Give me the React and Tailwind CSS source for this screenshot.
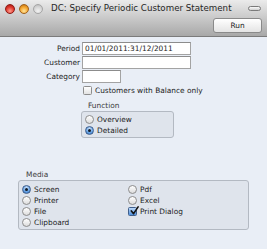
import React from "react";

function Radio({ on }) {
  return on ? (
    <span className="flex h-[9px] w-[9px] shrink-0 items-center justify-center rounded-full border border-[#3f5f8c] bg-[radial-gradient(circle_at_50%_30%,#d4e6fb,#6aa5e6_55%,#2f6fc0)]">
      <span className="h-[3px] w-[3px] rounded-full bg-[#111a26]" />
    </span>
  ) : (
    <span className="h-[9px] w-[9px] shrink-0 rounded-full border border-[#8d8d8d] bg-linear-to-b from-[#ffffff] to-[#dcdcdc]" />
  );
}

function Check({ on }) {
  return on ? (
    <span className="relative flex h-[9px] w-[9px] shrink-0 items-center justify-center rounded-[1.5px] border border-[#3f5f8c] bg-linear-to-b from-[#b9d6f7] to-[#4d8fdc]">
      <svg viewBox="0 0 10 10" className="absolute left-[1px] top-[-2px] h-[9px] w-[9px]">
        <path d="M1.5 5.5 L4 8.5 L9 1" fill="none" stroke="#111" strokeWidth="1.8" strokeLinecap="round" strokeLinejoin="round" />
      </svg>
    </span>
  ) : (
    <span className="h-[9px] w-[9px] shrink-0 rounded-[1.5px] border border-[#8d8d8d] bg-linear-to-b from-[#ffffff] to-[#e2e2e2]" />
  );
}

function Opt({ children, kind = "radio", on = false }) {
  return (
    <div className="flex h-[11px] items-center gap-[3px]">
      {kind === "radio" ? <Radio on={on} /> : <Check on={on} />}
      <span className="leading-none">{children}</span>
    </div>
  );
}

export default function App() {
  return (
    <div className="flex h-[249px] w-[267px] flex-col overflow-hidden font-['DejaVu_Sans',sans-serif] text-[7.4px] text-[#1c1c1c]">
      <div className="flex h-[37px] shrink-0 flex-col border-b border-[#7b7b7b] bg-linear-to-b from-[#ebebeb] to-[#a8a8a8]">
        <div className="flex h-[17px] items-center pl-[5px] pr-[6px]">
          <div className="flex gap-[4px]">
            <span className="h-[10px] w-[10px] rounded-full border border-[#8e1a14] bg-[radial-gradient(circle_at_50%_75%,#ff9d8f,#e0382c_55%,#9a140e)]" />
            <span className="h-[10px] w-[10px] rounded-full border border-[#a0601a] bg-[radial-gradient(circle_at_50%_75%,#ffe49a,#f4a42c_55%,#b4680e)]" />
            <span className="h-[10px] w-[10px] rounded-full border border-[#a5a5a5] bg-[radial-gradient(circle_at_50%_75%,#f2f2f2,#d3d3d3_60%,#b5b5b5)]" />
          </div>
          <span className="ml-[8px] text-[8.7px] leading-none text-[#262626]">DC: Specify Periodic Customer Statement</span>
          <span className="ml-auto h-[5px] w-[13px] rounded-full border border-[#7a7a7a] bg-linear-to-b from-[#fafafa] to-[#cfcfcf]" />
        </div>
        <div className="flex justify-end pr-[5px] pt-[1px]">
          <div className="flex h-[15px] w-[49px] items-center justify-center rounded-[3px] border border-[#8a8a8a] bg-linear-to-b from-[#ffffff] to-[#e4e4e4] text-[7.4px] leading-none">
            Run
          </div>
        </div>
      </div>

      <div className="flex-1 bg-[#e9eef6] pt-[5px]">
        <div className="grid grid-cols-[80px_auto] items-center gap-x-[2px] gap-y-[1px]">
          <span className="text-right leading-none">Period</span>
          <div className="flex h-[13px] w-[109px] items-center border border-[#a3a3a3] border-t-[#8c8c8c] bg-white pl-[2px] leading-none">
            01/01/2011:31/12/2011
          </div>
          <span className="text-right leading-none">Customer</span>
          <div className="h-[13px] w-[109px] border border-[#a3a3a3] border-t-[#8c8c8c] bg-white" />
          <span className="text-right leading-none">Category</span>
          <div className="h-[13px] w-[39px] border border-[#a3a3a3] border-t-[#8c8c8c] bg-white" />
        </div>

        <div className="ml-[83px] mt-[3px] flex h-[9px] items-center gap-[3px]">
          <Check />
          <span className="leading-none">Customers with Balance only</span>
        </div>

        <div className="ml-[81px] mt-[6px] w-[93px]">
          <div className="h-[10px] pl-[7px] leading-[10px] text-[#3c3c3c]">Function</div>
          <div className="h-[27px] rounded-[3px] border border-[#b3b9c2] bg-[#dfe4ec] pl-[3px] pt-[2px]">
            <Opt>Overview</Opt>
            <Opt on>Detailed</Opt>
          </div>
        </div>

        <div className="ml-[18px] mt-[32px] w-[231px]">
          <div className="h-[10px] pl-[8px] leading-[10px] text-[#3c3c3c]">Media</div>
          <div className="grid h-[50px] grid-cols-[106px_auto] content-start rounded-[3px] border border-[#b3b9c2] bg-[#dfe4ec] pl-[3px] pt-[3px]">
            <Opt on>Screen</Opt>
            <Opt>Pdf</Opt>
            <Opt>Printer</Opt>
            <Opt>Excel</Opt>
            <Opt>File</Opt>
            <Opt kind="check" on>Print Dialog</Opt>
            <Opt>Clipboard</Opt>
          </div>
        </div>
      </div>
    </div>
  );
}
